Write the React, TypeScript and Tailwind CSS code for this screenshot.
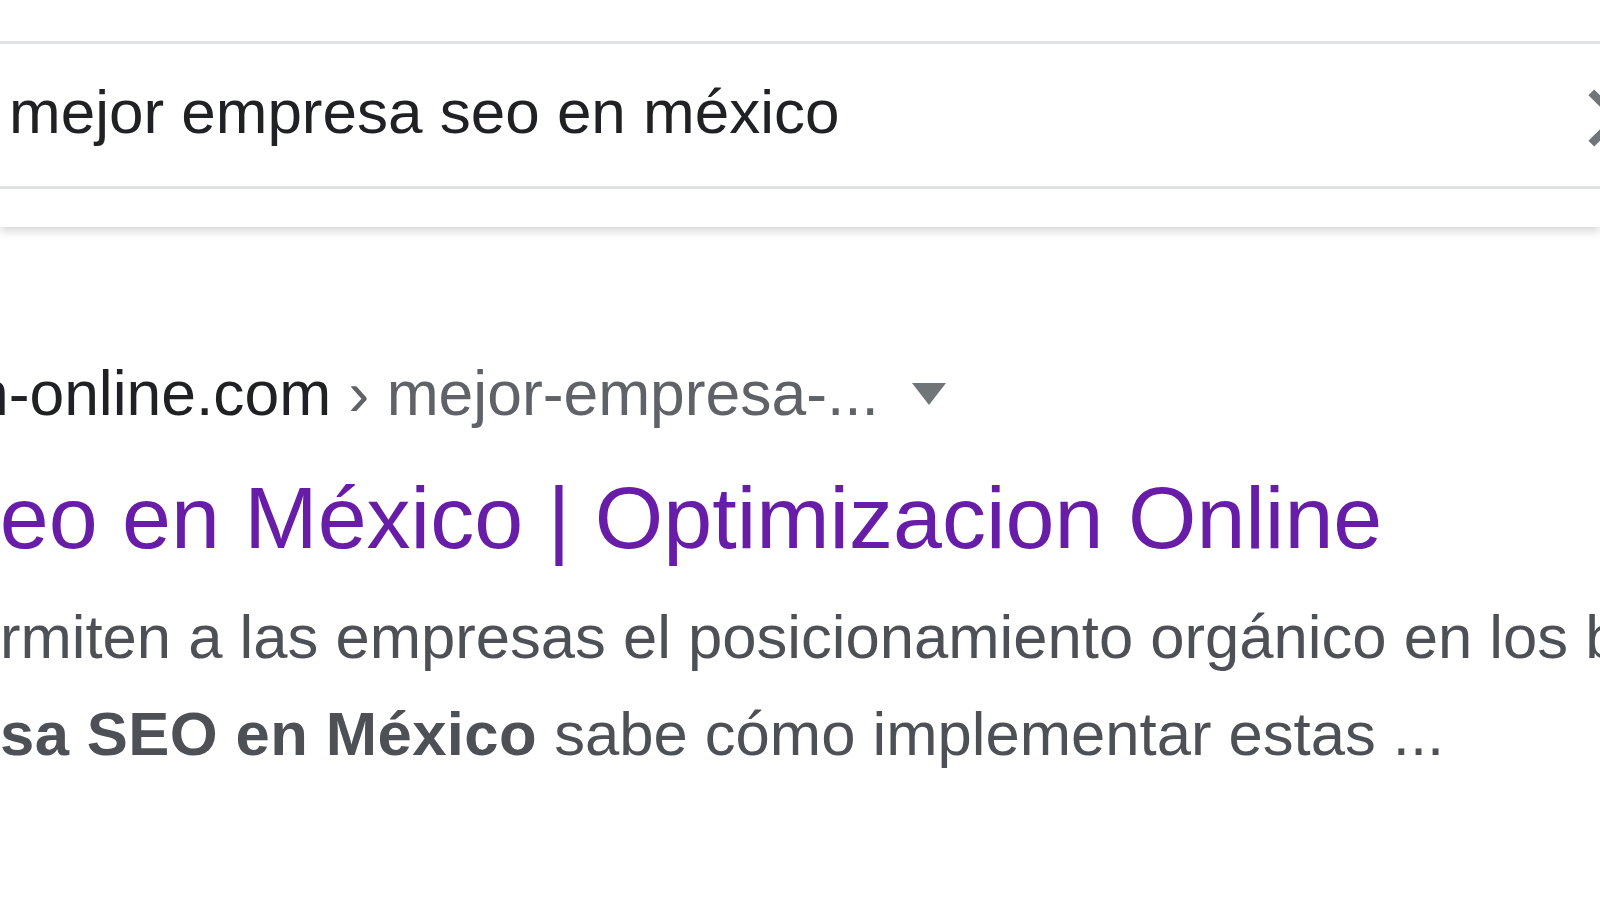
import React from 'react';

// Zoomed-in crop of a search results page: query box on top, one organic result below.

function ClearIcon() {
  return (
    <svg
      className="ml-auto mr-[-66px] mt-[25px] shrink-0"
      width="98"
      height="98"
      viewBox="0 0 24 24"
      fill="#70757a"
    >
      <path d="M19 6.41L17.59 5 12 10.59 6.41 5 5 6.41 10.59 12 5 17.59 6.41 19 12 13.41 17.59 19 19 17.59 13.41 12z" />
    </svg>
  );
}

function MenuArrow() {
  return (
    <svg className="ml-[33px] mt-[20px] shrink-0" width="34" height="22" viewBox="0 0 34 22">
      <path d="M0 0h34L17 22z" fill="#70757a" />
    </svg>
  );
}

export default function App() {
  return (
    <div className="h-screen w-full overflow-hidden bg-white font-['Liberation_Sans',Arial,sans-serif]">
      {/* Search header */}
      <header className="relative z-10 bg-white pt-[41px] pb-[38px] shadow-[0_4px_9px_rgba(0,0,0,0.17)]">
        <div className="flex h-[148px] items-start border-y-[3px] border-[#dfe1e5]">
          <span className="whitespace-nowrap pl-[9px] pt-[37px] text-[62px] leading-none text-[#202124]">
            mejor empresa seo en méxico
          </span>
          <ClearIcon />
        </div>
      </header>

      {/* Result */}
      <main className="pt-[136px]">
        <div className="flex items-start whitespace-nowrap text-[62.4px] leading-none">
          <span className="ml-[-26px] text-[#202124]">n-online.com</span>
          <span className="text-[#5f6368]">&nbsp;›&nbsp;mejor-empresa-...</span>
          <MenuArrow />
        </div>

        <div className="ml-[-59px] mt-[49px] whitespace-nowrap text-[88px] leading-none text-[#681da8]">
          Seo en México | Optimizacion Online
        </div>

        <div className="mt-[26px] text-[61.6px] leading-[97px] text-[#4d5156]">
          <div className="whitespace-nowrap">
            rmiten a las empresas el posicionamiento orgánico en los buscadores.
          </div>
          <div className="whitespace-nowrap">
            <b className="font-bold tracking-[0.4px]">sa SEO en México</b> sabe cómo implementar estas ...
          </div>
        </div>
      </main>
    </div>
  );
}
